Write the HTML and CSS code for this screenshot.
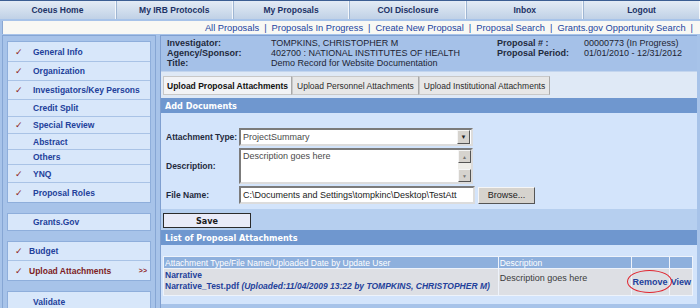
FILE: index.html
```html
<!DOCTYPE html>
<html lang="en">
<head>
  <meta charset="UTF-8" />
  <title>Coeus - Upload Attachments</title>
  <link rel="stylesheet" href="styles.css">
</head>
<body>

<div class="topnav">
  <a class="topnav-tab">Coeus Home</a>
  <a class="topnav-tab">My IRB Protocols</a>
  <a class="topnav-tab">My Proposals</a>
  <a class="topnav-tab">COI Disclosure</a>
  <a class="topnav-tab">Inbox</a>
  <a class="topnav-tab">Logout</a>
</div>

<div class="subnav">
  <a>All Proposals</a><span class="sep">|</span>
  <a>Proposals In Progress</a><span class="sep">|</span>
  <a>Create New Proposal</a><span class="sep">|</span>
  <a>Proposal Search</a><span class="sep">|</span>
  <a>Grants.gov Opportunity Search</a><span class="sep">|</span>
</div>

<div class="page">
  <!-- left menu -->
  <div class="sidebar">
    <div class="side-group">
      <div class="side-item tall"><span class="check">&#10003;</span>General Info</div>
      <div class="side-item"><span class="check">&#10003;</span>Organization</div>
      <div class="side-item"><span class="check">&#10003;</span>Investigators/Key Persons</div>
      <div class="side-item mid"><span class="check"></span>Credit Split</div>
      <div class="side-item mid"><span class="check">&#10003;</span>Special Review</div>
      <div class="side-item short"><span class="check"></span>Abstract</div>
      <div class="side-item xshort"><span class="check"></span>Others</div>
      <div class="side-item ynq"><span class="check">&#10003;</span>YNQ</div>
      <div class="side-item"><span class="check">&#10003;</span>Proposal Roles</div>
    </div>
    <div class="side-group">
      <div class="side-item short"><span class="check"></span>Grants.Gov</div>
    </div>
    <div class="side-group">
      <div class="side-item tight"><span class="check">&#10003;</span>Budget</div>
      <div class="side-item tight current"><span class="check">&#10003;</span>Upload Attachments<span class="arrows">&gt;&gt;</span></div>
    </div>
    <div class="side-group">
      <div class="side-item"><span class="check"></span>Validate</div>
    </div>
  </div>

  <!-- main content -->
  <div class="main">
    <div class="info">
      <span class="lbl">Investigator:</span>
      <span>TOMPKINS, CHRISTOPHER M</span>
      <span class="lbl">Proposal # :</span>
      <span>00000773 (In Progress)</span>
      <span class="lbl">Agency/Sponsor:</span>
      <span>402700 : NATIONAL INSTITUTES OF HEALTH</span>
      <span class="lbl">Proposal Period:</span>
      <span>01/01/2010 - 12/31/2012</span>
      <span class="lbl">Title:</span>
      <span class="wide">Demo Record for Website Documentation</span>
    </div>

    <div class="tabs">
      <div class="tab active">Upload Proposal Attachments</div>
      <div class="tab">Upload Personnel Attachments</div>
      <div class="tab">Upload Institutional Attachments</div>
    </div>

    <div class="bar">Add Documents</div>
    <div class="form">
      <div class="form-row">
        <label class="form-label">Attachment Type:</label>
        <div class="field select">
          <span class="field-text">ProjectSummary</span>
          <span class="drop">&#9660;</span>
        </div>
      </div>
      <div class="form-row">
        <label class="form-label">Description:</label>
        <div class="field textarea">
          <span class="field-text">Description goes here</span>
          <span class="scroll">
            <span class="scroll-btn">&#9650;</span>
            <span class="scroll-track"></span>
            <span class="scroll-btn">&#9660;</span>
          </span>
        </div>
      </div>
      <div class="form-row">
        <label class="form-label">File Name:</label>
        <div class="field file">
          <span class="field-text">C:\Documents and Settings\tompkinc\Desktop\TestAtt</span>
        </div>
        <button class="browse">Browse...</button>
      </div>
    </div>

    <div class="save-row">
      <button class="save">Save</button>
    </div>

    <div class="bar">List of Proposal Attachments</div>
    <div class="list">
      <table class="att-table">
        <tr>
          <th class="c1">Attachment Type/File Name/Uploaded Date by Update User</th>
          <th class="c2">Description</th>
          <th class="c3"></th>
          <th class="c4"></th>
        </tr>
        <tr>
          <td class="c1">
            <a class="att-link">Narrative</a><br>
            <a class="att-link">Narrative_Test.pdf <i>(Uploaded:11/04/2009 13:22 by TOMPKINS, CHRISTOPHER M)</i></a>
          </td>
          <td class="c2 desc">Description goes here</td>
          <td class="c3 action"><a class="remove">Remove<span class="circle"></span></a></td>
          <td class="c4 action"><a>View</a></td>
        </tr>
      </table>
    </div>
  </div>
</div>

</body>
</html>
```

FILE: styles.css
```css
body {
  margin: 0;
  background: #a7c3e9;
  font-family: "Liberation Sans", Arial, sans-serif;
  font-size: 9px;
  color: #1a1a1a;
  width: 700px;
  height: 308px;
  overflow: hidden;
}

a {
  color: #23419b;
  text-decoration: none;
}

/* top navigation */
.topnav {
  display: flex;
  height: 18px;
  border-top: 1px solid #3b5d92;
  background: linear-gradient(#e3ebf5, #c0d1e6);
}

.topnav-tab {
  flex: 1;
  display: flex;
  justify-content: center;
  align-items: center;
  font-weight: bold;
  font-size: 8.5px;
  color: #1c3266;
  border-right: 1px solid #f4f7fb;
  border-left: 1px solid #9fb6d3;
}

.topnav-tab:first-child {
  border-left: none;
}

.subnav {
  height: 13px;
  margin: 2px 0 0 2px;
  padding-right: 2px;
  background: #f8f8f4;
  border-left: 1px solid #8aa8d2;
  display: flex;
  justify-content: flex-end;
  align-items: center;
  font-size: 9.3px;
}

.subnav a {
  color: #2244a0;
}

.subnav .sep {
  color: #2244a0;
  margin: 0 5px;
}

/* page layout */
.page {
  display: flex;
  gap: 4px;
  padding: 1px 2px 0 2px;
}

.sidebar {
  width: 144px;
  flex: none;
  border: 1px solid #86a6d4;
  padding: 5px 4px 0 4px;
  display: flex;
  flex-direction: column;
  gap: 10px;
}

.side-group {
  background: #d8e7fa;
  border: 1px solid #8eaedb;
}

.side-item {
  box-sizing: border-box;
  height: 19px;
  display: flex;
  align-items: center;
  font-weight: bold;
  font-size: 8.5px;
  color: #23419b;
  border-bottom: 1px solid #a9c3e6;
}

.side-item:last-child {
  border-bottom: none;
}

.side-item.tall {
  height: 20px;
}

.side-item.ynq {
  height: 18px;
}

.side-item.mid {
  height: 17px;
}

.side-item.short {
  height: 16px;
}

.side-item.xshort {
  height: 15px;
}

.side-item.tight .check {
  width: 14px;
}

.check {
  width: 18px;
  padding-left: 7px;
  color: #8e1b22;
  font-family: "DejaVu Sans", sans-serif;
  font-size: 9px;
  flex: none;
}

.side-item.current {
  color: #7d1d24;
}

.arrows {
  margin-left: auto;
  margin-right: 3px;
  font-size: 7px;
  color: #8e1b22;
}

.main {
  flex: 1;
  border: 1px solid #7f9fd0;
  border-right: none;
  margin-right: 1px;
  display: flex;
  flex-direction: column;
}

.info {
  display: grid;
  grid-template-columns: 104px 226px 87px 1fr;
  grid-auto-rows: 10px;
  padding: 2px 0 3px 6px;
  line-height: 10px;
  background: #a5c1e8;
  color: #1d2433;
}

.info .lbl {
  font-weight: bold;
  color: #1f2a3d;
}

.info .wide {
  grid-column: span 3;
}

.tabs {
  display: flex;
  padding: 4px 0 0 2px;
  height: 22px;
  background: #dfe9f6;
  border-top: 1px solid #c3d5ee;
}

.tab {
  height: 17px;
  padding: 0 3px;
  display: flex;
  align-items: center;
  background: #e7e7e7;
  border: 1px solid #c8c8c8;
  border-right-color: #a9a9a9;
  color: #2b2b2b;
  font-size: 8.5px;
}

.tab + .tab {
  padding: 0 4px;
}

.tab.active {
  background: #f2f3f6;
  font-weight: bold;
  color: #111;
}

.bar {
  height: 15px;
  padding-left: 4px;
  display: flex;
  align-items: center;
  background: #6f97cf;
  color: #fff;
  font-family: "DejaVu Sans Condensed", "DejaVu Sans", sans-serif;
  font-weight: bold;
  font-size: 9px;
}

.form {
  background: #d3e4fb;
  padding: 15px 0 5px 5px;
  display: flex;
  flex-direction: column;
  gap: 2px;
}

.form-row {
  display: flex;
  align-items: center;
}

.form-label {
  width: 73px;
  flex: none;
  font-weight: bold;
  color: #1f2a3d;
  font-size: 8.5px;
}

.field {
  width: 230px;
  height: 14px;
  background: #fff;
  border: 2px solid;
  border-color: #7b7b7b #dcdcdc #dcdcdc #7b7b7b;
  display: flex;
  align-items: center;
  overflow: hidden;
  white-space: nowrap;
  color: #4a4a4a;
}

.field-text {
  padding-left: 2px;
  flex: 1;
  overflow: hidden;
}

.drop {
  width: 11px;
  height: 12px;
  margin-right: 1px;
  background: #d6d3ce;
  border: 1px solid;
  border-color: #f5f5f5 #555 #555 #f5f5f5;
  font-size: 6px;
  color: #222;
  display: flex;
  justify-content: center;
  align-items: center;
}

.field.textarea {
  height: 32px;
  align-items: stretch;
}

.field.textarea .field-text {
  padding-top: 1px;
}

.scroll {
  width: 13px;
  display: flex;
  flex-direction: column;
  background: #eeede9;
}

.scroll-btn {
  height: 11px;
  background: #d6d3ce;
  border: 1px solid;
  border-color: #f5f5f5 #555 #555 #f5f5f5;
  font-size: 5px;
  color: #777;
  display: flex;
  justify-content: center;
  align-items: center;
}

.scroll-track {
  flex: 1;
}

.field.file {
  width: 232px;
  color: #222;
}

.browse {
  margin-left: 3px;
  width: 57px;
  height: 17px;
  padding: 0;
  background: #d6d3ce;
  border: 1px solid;
  border-color: #f5f5f5 #555 #555 #f5f5f5;
  font-family: "Liberation Sans", Arial, sans-serif;
  font-size: 9px;
  color: #222;
}

.save-row {
  background: #b6cfef;
  padding: 4px 0 2px 2px;
}

.save {
  width: 88px;
  height: 15px;
  padding: 0;
  background: #e9ebf8;
  border: 1px solid #2b2b2b;
  font-family: "DejaVu Sans Condensed", "DejaVu Sans", sans-serif;
  font-weight: bold;
  font-size: 9px;
  color: #1c1c1c;
}

.list {
  background: #d3e4fb;
  padding: 11px 0 8px 2px;
}

.att-table {
  border-collapse: collapse;
  width: 530px;
}

.att-table th {
  background: #8eb0dd;
  color: #fff;
  font-weight: normal;
  text-align: left;
  height: 11px;
  padding: 0 1px;
  border: 1px solid #eef3fb;
  font-size: 8.5px;
}

.att-table td {
  background: #dddfe4;
  border: 1px solid #eef3fb;
  padding: 1px 1px;
  vertical-align: top;
  height: 21px;
}

.att-table .c1 {
  width: 335px;
}

.att-table .c2 {
  width: 131px;
}

.att-table .c3 {
  width: 31px;
}

.att-link {
  color: #23419b;
  font-weight: bold;
  font-size: 8.5px;
  line-height: 11px;
}

.desc {
  color: #3b3b3b;
  padding-top: 4px !important;
}

.action {
  vertical-align: middle !important;
  font-weight: bold;
  font-size: 9px;
}

.remove {
  position: relative;
}

/* red annotation ring around Remove */
.circle {
  position: absolute;
  left: -6px;
  top: -7px;
  width: 43px;
  height: 21px;
  border: 1.5px solid #e0242e;
  border-radius: 50%;
}
```
